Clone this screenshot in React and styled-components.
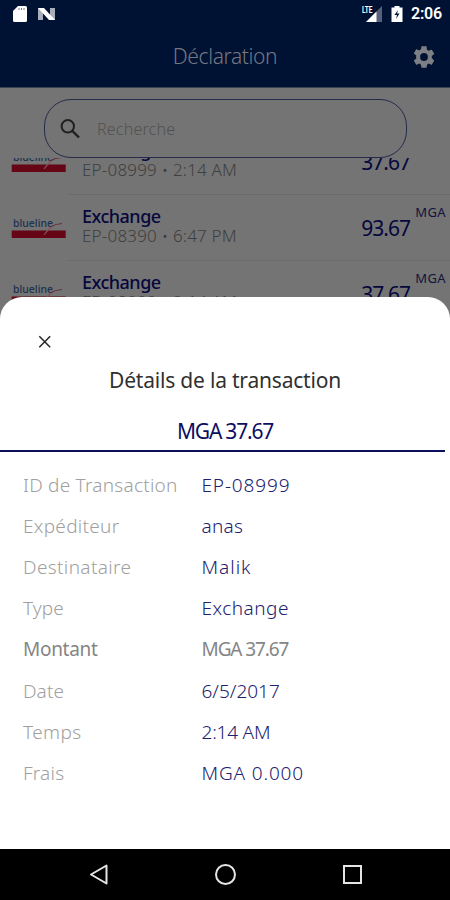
import React from 'react';
import styled, { createGlobalStyle } from 'styled-components';

const GlobalStyle = createGlobalStyle`
  * {
    box-sizing: border-box;
  }

  body {
    margin: 0;
    font-family: 'Noto Sans', 'Open Sans', sans-serif;
  }
`;

const Screen = styled.div`
  position: relative;
  display: flex;
  flex-direction: column;
  width: 450px;
  height: 900px;
  overflow: hidden;
  background: #747474;
`;

const Header = styled.header`
  height: 88px;
  background: #001233;
  border-bottom: 1px solid #3a4252;
`;

const StatusBar = styled.div`
  display: flex;
  align-items: center;
  justify-content: space-between;
  height: 28px;
  padding: 0 8px 0 12px;
  color: #fff;
`;

const StatusIcons = styled.div`
  display: flex;
  align-items: center;
  gap: ${({ $gap }) => $gap}px;

  svg {
    display: block;
  }

  time {
    font: 600 16px/28px Roboto, sans-serif;
    letter-spacing: -0.2px;
  }
`;

const TitleBar = styled.div`
  display: grid;
  grid-template-columns: 60px 1fr 60px;
  align-items: center;
  height: 58px;

  h1 {
    grid-column: 2;
    margin: 0;
    color: #747780;
    font-size: 21px;
    font-weight: 300;
    line-height: 28px;
    letter-spacing: -0.4px;
    text-align: center;
    transform: translateY(-1px);
  }

  svg {
    justify-self: end;
    margin-right: 13px;
  }
`;

const SearchArea = styled.div`
  flex: none;
  height: 70px;
  padding: 11px 43px 0 44px;
`;

const SearchBox = styled.div`
  display: flex;
  align-items: center;
  height: 59px;
  padding-left: 13px;
  border: 1px solid #262b4a;
  border-radius: 27px;
  color: #525252;
  font-size: 16px;
  font-weight: 300;
  letter-spacing: 0.2px;

  svg {
    margin-right: 15px;
  }
`;

const List = styled.div`
  height: 146px;
  overflow: hidden;

  & > div:first-child {
    margin-top: -29px;
  }
`;

const ListRow = styled.div`
  display: flex;
  height: 66px;
  padding-left: 11px;

  & > svg {
    flex: none;
    margin-top: 23px;
  }
`;

const RowBody = styled.div`
  display: flex;
  flex: 1;
  margin-left: 1px;
  padding-left: 15px;
  border-bottom: 1px solid #6c6c6c;
`;

const RowText = styled.div`
  width: 240px;
  padding-top: 11px;
  white-space: nowrap;

  strong {
    display: block;
    color: #06073d;
    font-size: 18px;
    font-weight: 500;
    line-height: 20px;
    letter-spacing: -0.5px;
  }

  span {
    display: block;
    color: #3f3f3f;
    font-size: 17px;
    font-weight: 300;
    line-height: 20px;
    letter-spacing: 0.2px;
  }
`;

const Amount = styled.div`
  flex: 1;
  padding-top: 19px;
  color: #06073d;
  font-size: 21px;
  font-weight: 400;
  line-height: 28px;
  letter-spacing: -1px;
  text-align: right;
`;

const Currency = styled.div`
  width: 40px;
  padding: 9px 4px 0 0;
  color: #12123c;
  font-size: 13px;
  line-height: 16px;
  letter-spacing: 0.4px;
  text-align: right;
`;

const Sheet = styled.section`
  position: absolute;
  top: 297px;
  right: 0;
  bottom: 51px;
  left: 0;
  background: #fff;
  border-radius: 22px 22px 0 0;

  h2 {
    margin: 17px 0 0;
    color: #303030;
    font-size: 21px;
    font-weight: 400;
    line-height: 28px;
    letter-spacing: -0.2px;
    text-align: center;
  }
`;

const CloseButton = styled.button`
  display: block;
  margin: 38px 0 0 38px;
  padding: 0;
  border: 0;
  background: none;

  svg {
    display: block;
  }
`;

const Total = styled.div`
  height: 58px;
  margin-right: 5px;
  padding: 23px 0 0 5px;
  border-bottom: 2px solid #0d0d5c;
  color: #0d0d62;
  font-size: 21px;
  line-height: 28px;
  letter-spacing: -1.2px;
  text-align: center;
`;

const Details = styled.dl`
  margin: 12px 0 0;
  padding-left: 23px;
`;

const Detail = styled.div`
  display: grid;
  grid-template-columns: 178.5px 1fr;
  align-items: center;
  height: 41.2px;
  color: ${({ $muted }) => ($muted ? '#858585' : '#a0a0a0')};
  font-size: 19px;
  font-weight: ${({ $muted }) => ($muted ? 400 : 300)};
  line-height: 26px;
  white-space: nowrap;
`;

const DetailLabel = styled.dt`
  letter-spacing: ${({ $spacing }) => $spacing}px;
`;

const DetailValue = styled.dd`
  margin: 0;
  color: ${({ $muted }) => ($muted ? '#858585' : '#20206c')};
  letter-spacing: ${({ $spacing }) => $spacing}px;
`;

const NavBar = styled.nav`
  display: flex;
  align-items: center;
  justify-content: space-between;
  height: 52px;
  margin-top: auto;
  padding: 0 87px 0 88px;
  background: #000;
  border-top: 1px solid #555;
`;

const Brand = () => (
  <svg width="55" height="28" viewBox="0 0 55 28">
    <text x="2" y="9" textLength="40" lengthAdjust="spacingAndGlyphs" fontSize="10.5" fontWeight="500" fill="#1c3150">
      blueline
    </text>
    <path d="M0.7 12.5H54.7V20H0.7Z" fill="#650515" />
    <path d="M39 9Q44 6 51 5.5" fill="none" stroke="#65303a" strokeWidth="1.1" />
    <path d="M33 17Q36 13 40 9" fill="none" stroke="#81545b" strokeWidth="1.1" />
  </svg>
);

const transactions = [
  { id: 'EP-08999', time: '2:14 AM', amount: '37.67' },
  { id: 'EP-08390', time: '6:47 PM', amount: '93.67' },
  { id: 'EP-08999', time: '2:14 AM', amount: '37.67' },
];

const details = [
  { label: 'ID de Transaction', value: 'EP-08999', ls: 0.24, vs: 0.85 },
  { label: 'Expéditeur', value: 'anas', ls: 0.3, vs: 0.3 },
  { label: 'Destinataire', value: 'Malik', ls: 0.37, vs: 1 },
  { label: 'Type', value: 'Exchange', ls: 0.1, vs: 0.5 },
  { label: 'Montant', value: 'MGA 37.67', ls: -0.3, vs: -1.1, muted: true },
  { label: 'Date', value: '6/5/2017', ls: 0.1, vs: 0 },
  { label: 'Temps', value: '2:14 AM', ls: 0.4, vs: -0.2 },
  { label: 'Frais', value: 'MGA 0.000', ls: 0.2, vs: 0.85 },
];

const App = () => (
  <>
    <GlobalStyle />
    <Screen>
      <Header>
        <StatusBar>
          <StatusIcons $gap={9}>
            <svg width="16" height="18" viewBox="0 0 16 18">
              <path d="M6 1H13.5Q15 1 15 2.5V15.5Q15 17 13.5 17H2.5Q1 17 1 15.5V6Z" fill="#fff" />
              <path d="M7 3V5M9.5 3V5M12 3V5" stroke="#777" />
            </svg>
            <svg width="19" height="18" viewBox="0 0 19 18">
              <path d="M1 3H6V15H1ZM13 3H18V15H13Z" fill="#a8aebb" />
              <path d="M1 3H7L18 15H12Z" fill="#fff" />
            </svg>
          </StatusIcons>
          <StatusIcons $gap={8}>
            <svg width="21" height="18" viewBox="0 0 21 18">
              <path d="M20 1V17H4Z" fill="#55617a" />
              <path d="M14.5 6.5V17H4Z" fill="#fff" />
              <text x="0" y="7.5" textLength="10.5" lengthAdjust="spacingAndGlyphs" fontFamily="Roboto, sans-serif" fontSize="8.5" fontWeight="700" fill="#fff">
                LTE
              </text>
            </svg>
            <svg width="12" height="18" viewBox="0 0 12 18">
              <path d="M3.5 1H8.5V2.5H11.5V17H.5V2.5H3.5Z" fill="#fff" />
              <path d="M7 5L3.5 10H6L5 14L8.5 8.5H6Z" fill="#001233" />
            </svg>
            <time>2:06</time>
          </StatusIcons>
        </StatusBar>
        <TitleBar>
          <h1>Déclaration</h1>
          <svg width="26" height="26" viewBox="0 0 24 24" fill="#7d7f84">
            <path d="M19.14 12.94c.04-.3.06-.61.06-.94s-.02-.64-.07-.94l2.03-1.58a.49.49 0 0 0 .12-.61l-1.92-3.32a.49.49 0 0 0-.59-.22l-2.39.96a7 7 0 0 0-1.62-.94l-.36-2.54A.48.48 0 0 0 13.92 2h-3.84a.48.48 0 0 0-.48.41l-.36 2.54a7 7 0 0 0-1.62.94l-2.39-.96a.49.49 0 0 0-.59.22L2.72 8.47a.49.49 0 0 0 .12.61l2.03 1.58a7.5 7.5 0 0 0 0 2.68l-2.03 1.58a.49.49 0 0 0-.12.61l1.92 3.32c.12.22.37.29.59.22l2.39-.96c.5.38 1.03.7 1.62.94l.36 2.54c.05.24.24.41.48.41h3.84c.24 0 .44-.17.48-.41l.36-2.54a7 7 0 0 0 1.62-.94l2.39.96c.22.08.47 0 .59-.22l1.92-3.32a.49.49 0 0 0-.12-.61zM12 15.6A3.6 3.6 0 1 1 12 8.4a3.6 3.6 0 0 1 0 7.2z" />
          </svg>
        </TitleBar>
      </Header>
      <SearchArea>
        <SearchBox>
          <svg width="24" height="24" viewBox="0 0 24 24" fill="none" stroke="#202020">
            <circle cx="9.8" cy="9.3" r="6.2" strokeWidth="2" />
            <path d="M14.3 13.8L21 20.5" strokeWidth="2.4" />
          </svg>
          Recherche
        </SearchBox>
      </SearchArea>
      <List>
        {transactions.map((item, index) => (
          <ListRow key={index}>
            <Brand />
            <RowBody>
              <RowText>
                <strong>Exchange</strong>
                <span>
                  {item.id} • {item.time}
                </span>
              </RowText>
              <Amount>{item.amount}</Amount>
              <Currency>MGA</Currency>
            </RowBody>
          </ListRow>
        ))}
      </List>
      <Sheet>
        <CloseButton aria-label="Fermer">
          <svg width="14" height="14" viewBox="0 0 14 14" stroke="#252525" strokeWidth="1.5">
            <path d="M1.3 1.3L12.2 12.2M12.2 1.3L1.3 12.2" />
          </svg>
        </CloseButton>
        <h2>Détails de la transaction</h2>
        <Total>MGA 37.67</Total>
        <Details>
          {details.map((item) => (
            <Detail key={item.label} $muted={item.muted}>
              <DetailLabel $spacing={item.ls}>{item.label}</DetailLabel>
              <DetailValue $muted={item.muted} $spacing={item.vs}>
                {item.value}
              </DetailValue>
            </Detail>
          ))}
        </Details>
      </Sheet>
      <NavBar>
        <svg width="22" height="24" viewBox="0 0 22 24" fill="none" stroke="#e5e5e5" strokeWidth="2">
          <path d="M18.5 2.5V20.5L3 11.5Z" strokeLinejoin="round" />
        </svg>
        <svg width="24" height="24" viewBox="0 0 24 24" fill="none" stroke="#e5e5e5" strokeWidth="2">
          <circle cx="11.5" cy="11.5" r="9.5" />
        </svg>
        <svg width="22" height="24" viewBox="0 0 22 24" fill="none" stroke="#e5e5e5" strokeWidth="2">
          <rect x="3" y="3" width="17" height="17" />
        </svg>
      </NavBar>
    </Screen>
  </>
);

export default App;
